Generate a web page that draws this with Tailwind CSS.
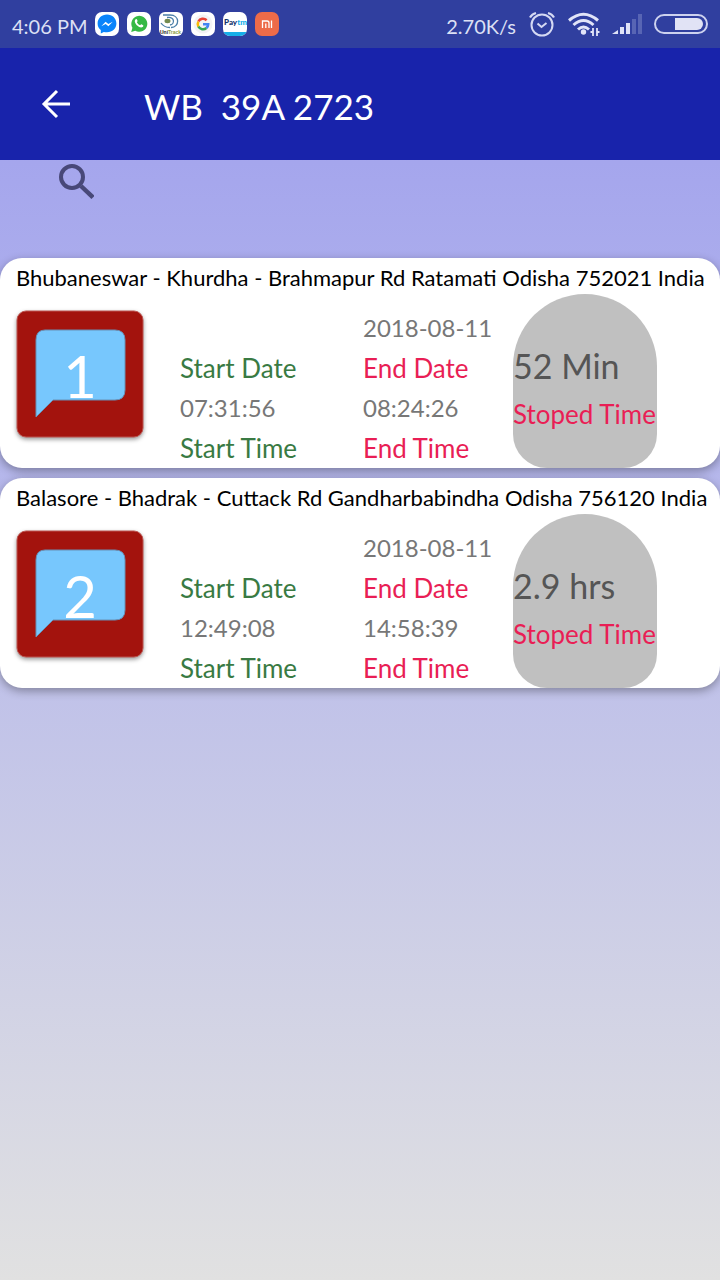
<!DOCTYPE html>
<html lang="en">
<head>
<meta charset="utf-8">
<meta name="viewport" content="width=device-width, initial-scale=1">
<title>WB 39A 2723</title>
<script src="https://cdn.jsdelivr.net/npm/@tailwindcss/browser@4"></script>
</head>
<body class="min-h-screen flex flex-col bg-linear-to-b from-[#9d9dee] to-[#e1e1e1] font-['Lato',sans-serif]">
<div class="h-12 bg-[#303f9f] px-3 flex items-center justify-between text-[#dde0f5] text-[20px]">
  <div class="flex items-center gap-2">
    <span class="whitespace-nowrap w-[75px] pt-1">4:06 PM</span>
    <svg class="size-6" viewBox="0 0 24 24" role="img" aria-label="Messenger"><rect width="24" height="24" rx="7" fill="#fff"/><path d="M12 2.6C6.600 2.600 2.600 6.500 2.600 11.500c0 2.700 1.200 5 3.200 6.600v3.400l3-1.600c1 .3 2.100.4 3.200.4 5.400 0 9.400-3.900 9.400-8.800S17.400 2.600 12 2.600z" fill="#0a84fb"/><path d="M6.300 14.200l4.300-4.500 2.700 2.300 4.400-2.300-4.300 4.500-2.700-2.300z" fill="#fff"/></svg>
    <svg class="size-6" viewBox="0 0 24 24" role="img" aria-label="WhatsApp"><rect width="24" height="24" rx="7" fill="#fff"/><path d="M4.200 20l1.200-4.200A8 8 0 1 1 8.300 18.700z" fill="#35b944"/><path d="M8.700 7.300c.6-.5 1.100-.2 1.300.3l.6 1.500c.1.500-.8 1-.6 1.400.7 1.300 1.700 2.200 3 2.700.5.100.9-1.100 1.400-.9l1.700.9c.5.300.1 1.500-.5 1.900-1.500 1-3.700.1-5.400-1.500-1.800-1.600-3.500-4.800-1.500-6.300z" fill="#fff"/></svg>
    <svg class="size-6" viewBox="0 0 24 24" role="img" aria-label="UniTrack"><rect width="24" height="24" rx="6" fill="#fff"/><g fill="none" stroke="#4b7fa8" stroke-width="1.300"><path d="M4 3h7c10 0 10 12 1 12.500M8 5.500c8-1 8 6.500 3 7.500M2 11c2 3 5 4.500 9 4.500"/></g><ellipse cx="8.500" cy="9" rx="3" ry="2.200" fill="#738b50"/><text x="1" y="22" font-family="Liberation Sans" font-weight="700" font-size="5" fill="#222">Uni<tspan fill="#8a9b45">Track</tspan></text></svg>
    <svg class="size-6" viewBox="0 0 24 24" role="img" aria-label="Google"><rect width="24" height="24" rx="7" fill="#fff"/><circle cx="12" cy="12" r="9.500" fill="#f3f3f5"/><g fill="none" stroke-width="2.600"><path d="M15.600 8.200A5.200 5.200 0 0 0 7.400 9.500" stroke="#ea4335"/><path d="M7.400 9.500a5.200 5.200 0 0 0 0 5" stroke="#fbbc05"/><path d="M7.400 14.500a5.200 5.200 0 0 0 8 1.500" stroke="#34a853"/><path d="M15.400 16c1.300-1.100 1.800-2.300 1.800-3.800H12" stroke="#4285f4"/></g></svg>
    <svg class="size-6" viewBox="0 0 24 24" role="img" aria-label="Paytm"><defs><clipPath id="pt"><rect width="24" height="24" rx="7"/></clipPath></defs><g clip-path="url(#pt)"><rect width="24" height="24" fill="#fff"/><rect y="20" width="24" height="4" fill="#16aee8"/></g><text x="1" y="13" font-family="Lato" font-weight="900" font-size="8" fill="#10316b">Pay<tspan fill="#16aee8">tm</tspan></text></svg>
    <svg class="size-6" viewBox="0 0 24 24" role="img" aria-label="Mi"><rect width="24" height="24" rx="7" fill="#ed6b49"/><path d="M7.500 16V9h4.500q2 0 2 2v5M10.800 11.500V16M16.500 8.500V16" fill="none" stroke="#fff" stroke-width="1.300"/></svg>
  </div>
  <div class="flex items-center">
    <span class="whitespace-nowrap mr-3 pt-1">2.70K/s</span>
    <svg class="w-7 h-7 mr-3" viewBox="0 0 28 28" fill="none" stroke="#d5d9f3" stroke-width="2" role="img" aria-label="Alarm"><circle cx="14" cy="15" r="10.500"/><path d="M9.500 13.500l4 3.500 5-4" /><path d="M2 7.500Q4 4 8 3M26 7.500Q24 4 20 3" stroke-width="2.200"/></svg>
    <svg class="w-8 h-7 mr-3" viewBox="0 0 32 28" fill="none" stroke="#e1e4f8" stroke-width="3" role="img" aria-label="Wi-Fi"><path d="M1 10.500Q15.500-2 30 10.500M5.500 15Q15.500 6 25.500 15M10 19.500Q15.500 14.500 21 19.500"/><circle cx="15.500" cy="22" r="2.700" fill="#e1e4f8" stroke="none"/><path d="M25 18v8M29 18v8M22.500 22H25M29 22h2.500" stroke-width="1.800"/></svg>
    <svg class="w-[30px] h-6 mr-3" viewBox="0 0 30 24" fill="#dfe2f7" role="img" aria-label="Signal"><path d="M0 22l6-4v4z"/><rect x="8" y="15" width="4" height="7"/><rect x="14" y="11" width="4" height="11"/><g fill="#5865b4"><rect x="20" y="7" width="4" height="15"/><rect x="26" y="2" width="4" height="20"/></g></svg>
    <svg class="w-[54px] h-5" viewBox="0 0 54 20" role="img" aria-label="Battery"><rect x="1" y="1" width="52" height="18" rx="9" fill="none" stroke="#cdd2ef" stroke-width="2"/><path d="M21 4h22a6 6 0 0 1 0 12H21z" fill="#e1e3f5"/></svg>
  </div>
</div>
<header class="h-28 bg-[#1823ab] flex items-center text-white pl-10">
  <button type="button" aria-label="Back" class="w-[104px] text-left"><svg class="size-8" viewBox="0 0 32 32" fill="none" stroke="#fff" stroke-width="3"><path d="M30 16H4M17 3L4 16l13 13"/></svg></button>
  <h1 class="text-[35px] leading-none whitespace-pre pt-1">WB  39A 2723</h1>
</header>
<div class="h-[98px] pl-[58px] pt-1">
  <button type="button" aria-label="Search" class="block"><svg class="size-9" viewBox="0 0 36 36" fill="none" stroke="#484878"><circle cx="14" cy="13" r="11" stroke-width="4"/><path d="M23 22l12 11.500" stroke-width="4.500"/></svg></button>
</div>
<main class="flex flex-col gap-[10px]">
  <article class="bg-white rounded-[22px] px-4 shadow-[0_3px_10px_#00000055]">
    <h2 class="h-9 pt-1 leading-8 text-[22px] text-black whitespace-nowrap">Bhubaneswar - Khurdha - Brahmapur Rd Ratamati Odisha 752021 India</h2>
    <div class="grid grid-cols-[164fr_183fr_150fr_144fr_47fr] text-[24px] leading-10 text-[#777] whitespace-nowrap">
      <div class="pt-4">
        <div class="grid size-32">
          <svg class="col-start-1 row-start-1 size-32 drop-shadow-[0_2px_2px_#00000066]" viewBox="0 0 128 128" aria-hidden="true"><rect x="1" y="1" width="126" height="126" rx="9" fill="#a3130d" stroke="#bd5550"/><path d="M29 20h70q10 0 10 10v50q0 10-10 10H37L20 107V30q0-10 9-10z" fill="#77c7fd" stroke="#6990b5"/></svg>
          <span class="col-start-1 row-start-1 z-10 self-center justify-self-center pt-1 text-[58px] leading-none text-white">1</span>
        </div>
      </div>
      <dl class="pt-[54px]"><dt class="text-[#397a43] text-[26px]">Start Date</dt><dd>07:31:56</dd><dt class="text-[#397a43] text-[26px]">Start Time</dt></dl>
      <dl class="pt-[14px]"><dd>2018-08-11</dd><dt class="text-[#e91e55] text-[26px]">End Date</dt><dd>08:24:26</dd><dt class="text-[#e91e55] text-[26px]">End Time</dt></dl>
      <div class="bg-[#c0c0c0] rounded-t-[72px] rounded-b-[34px] pt-12"><p class="text-[34px] leading-12 text-[#555]">52 Min</p><p class="text-[#e91e55] text-[26px] leading-12">Stoped Time</p></div>
    </div>
  </article>
  <article class="bg-white rounded-[22px] px-4 shadow-[0_3px_10px_#00000055]">
    <h2 class="h-9 pt-1 leading-8 text-[22px] text-black whitespace-nowrap">Balasore - Bhadrak - Cuttack Rd Gandharbabindha Odisha 756120 India</h2>
    <div class="grid grid-cols-[164fr_183fr_150fr_144fr_47fr] text-[24px] leading-10 text-[#777] whitespace-nowrap">
      <div class="pt-4">
        <div class="grid size-32">
          <svg class="col-start-1 row-start-1 size-32 drop-shadow-[0_2px_2px_#00000066]" viewBox="0 0 128 128" aria-hidden="true"><rect x="1" y="1" width="126" height="126" rx="9" fill="#a3130d" stroke="#bd5550"/><path d="M29 20h70q10 0 10 10v50q0 10-10 10H37L20 107V30q0-10 9-10z" fill="#77c7fd" stroke="#6990b5"/></svg>
          <span class="col-start-1 row-start-1 z-10 self-center justify-self-center pt-1 text-[58px] leading-none text-white">2</span>
        </div>
      </div>
      <dl class="pt-[54px]"><dt class="text-[#397a43] text-[26px]">Start Date</dt><dd>12:49:08</dd><dt class="text-[#397a43] text-[26px]">Start Time</dt></dl>
      <dl class="pt-[14px]"><dd>2018-08-11</dd><dt class="text-[#e91e55] text-[26px]">End Date</dt><dd>14:58:39</dd><dt class="text-[#e91e55] text-[26px]">End Time</dt></dl>
      <div class="bg-[#c0c0c0] rounded-t-[72px] rounded-b-[34px] pt-12"><p class="text-[34px] leading-12 text-[#555]">2.9 hrs</p><p class="text-[#e91e55] text-[26px] leading-12">Stoped Time</p></div>
    </div>
  </article>
</main>
</body>
</html>
